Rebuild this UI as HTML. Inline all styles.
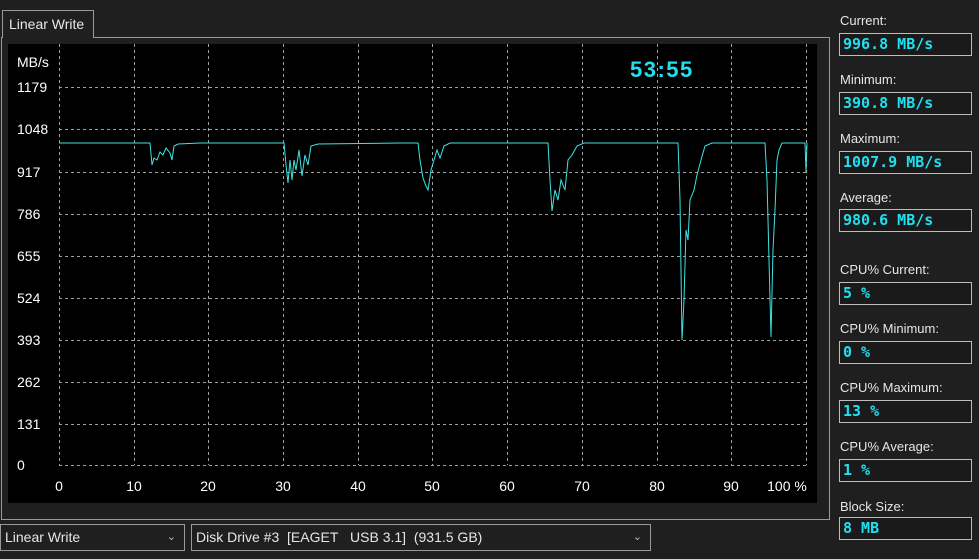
<!DOCTYPE html>
<html><head><style>
body{margin:0;width:979px;height:559px;background:#1f1f1f;font-family:"Liberation Sans",sans-serif;color:#e8e8e8;position:relative;overflow:hidden}
.a{position:absolute}
.lbl{position:absolute;left:840px;font-size:13px;color:#e6e6e6}
.box{position:absolute;left:839px;border:1px solid #bdbdbd;background:#1a1a1a;color:#20e0f0;font:bold 15px "DejaVu Sans Mono",monospace;line-height:21px;padding-left:3px;box-sizing:border-box;width:133px;height:23px}
.dd{position:absolute;top:524px;height:27px;border:1px solid #9a9a9a;box-sizing:border-box;font-size:14px;line-height:25px;padding-left:4px;color:#e6e6e6;background:#1f1f1f}
.dd span{position:absolute;right:8px;top:0;font-size:11px;color:#bbb}
</style></head><body>
<div class="a" style="left:2px;top:10px;width:92px;height:28px;border:1px solid #9a9a9a;border-bottom:none;background:#1f1f1f;font-size:14px;line-height:26px;padding-left:6px;box-sizing:border-box;z-index:2">Linear Write</div>
<div class="a" style="left:1px;top:37px;width:829px;height:483px;border:1px solid #9a9a9a;box-sizing:border-box"></div>
<svg class="a" style="left:8px;top:44px" width="809" height="459" viewBox="8 44 809 459">
<rect x="8" y="44" width="809" height="459" fill="#000"/>
<g stroke="#a0a0a0" stroke-dasharray="3,3" stroke-width="1">
<path d="M59.5 44V465M134.5 44V465M208.5 44V465M283.5 44V465M358.5 44V465M432.5 44V465M507.5 44V465M582.5 44V465M657.5 44V465M731.5 44V465M806.5 44V465"/>
<path d="M59 87.5H807M59 129.5H807M59 172.5H807M59 214.5H807M59 256.5H807M59 298.5H807M59 340.5H807M59 382.5H807M59 424.5H807M59 465.5H807"/>
</g>
<polyline fill="none" stroke="#3de4e4" stroke-width="1" points="59,143 100,143 150,143 152,165 154,158 157,160 160,152 163,155 166,148 170,153 172,160 174,146 178,144 200,143 284,143 286,165 288,183 290,160 292,180 294,160 296,170 299,150 302,176 305,155 308,165 311,146 318,144 400,143 418,143 420,160 423,178 426,186 428,190 431,170 434,160 437,150 440,158 444,146 450,143 548,143 550,180 552,211 555,190 558,200 561,180 565,190 568,160 572,155 577,146 584,143 678,143 680,200 682,340 684,300 686,230 688,240 690,200 694,190 697,175 701,160 705,146 712,143 765,143 767,180 769,260 771,337 773,250 775,210 777,160 779,150 782,143 805,143 806,172 807,143"/>
<g fill="#fff" font-size="14" font-family="Liberation Sans,sans-serif">
<text x="17" y="67">MB/s</text>
<text x="17" y="92">1179</text><text x="17" y="134">1048</text><text x="17" y="177">917</text><text x="17" y="219">786</text><text x="17" y="261">655</text><text x="17" y="303">524</text><text x="17" y="345">393</text><text x="17" y="387">262</text><text x="17" y="429">131</text><text x="17" y="470">0</text>
<g text-anchor="middle"><text x="59" y="491">0</text><text x="134" y="491">10</text><text x="208" y="491">20</text><text x="283" y="491">30</text><text x="358" y="491">40</text><text x="432" y="491">50</text><text x="507" y="491">60</text><text x="582" y="491">70</text><text x="657" y="491">80</text><text x="731" y="491">90</text><text x="787" y="491">100 %</text></g>
</g>
<text x="630" y="77" fill="#20e0f0" font-size="22" font-weight="bold" letter-spacing="1.5" font-family="Liberation Sans,sans-serif">53:55</text>
</svg>
<div class="lbl" style="top:13px">Current:</div><div class="box" style="top:33px">996.8 MB/s</div>
<div class="lbl" style="top:72px">Minimum:</div><div class="box" style="top:92px">390.8 MB/s</div>
<div class="lbl" style="top:131px">Maximum:</div><div class="box" style="top:151px">1007.9 MB/s</div>
<div class="lbl" style="top:190px">Average:</div><div class="box" style="top:209px">980.6 MB/s</div>
<div class="lbl" style="top:262px">CPU% Current:</div><div class="box" style="top:282px">5 %</div>
<div class="lbl" style="top:321px">CPU% Minimum:</div><div class="box" style="top:341px">0 %</div>
<div class="lbl" style="top:380px">CPU% Maximum:</div><div class="box" style="top:400px">13 %</div>
<div class="lbl" style="top:439px">CPU% Average:</div><div class="box" style="top:459px">1 %</div>
<div class="lbl" style="top:499px">Block Size:</div><div class="box" style="top:517px">8 MB</div>
<div class="dd" style="left:0;width:185px">Linear Write<span>&#8964;</span></div>
<div class="dd" style="left:191px;width:460px">Disk Drive #3&nbsp; [EAGET&nbsp;&nbsp; USB 3.1]&nbsp; (931.5 GB)<span>&#8964;</span></div>
</body></html>
